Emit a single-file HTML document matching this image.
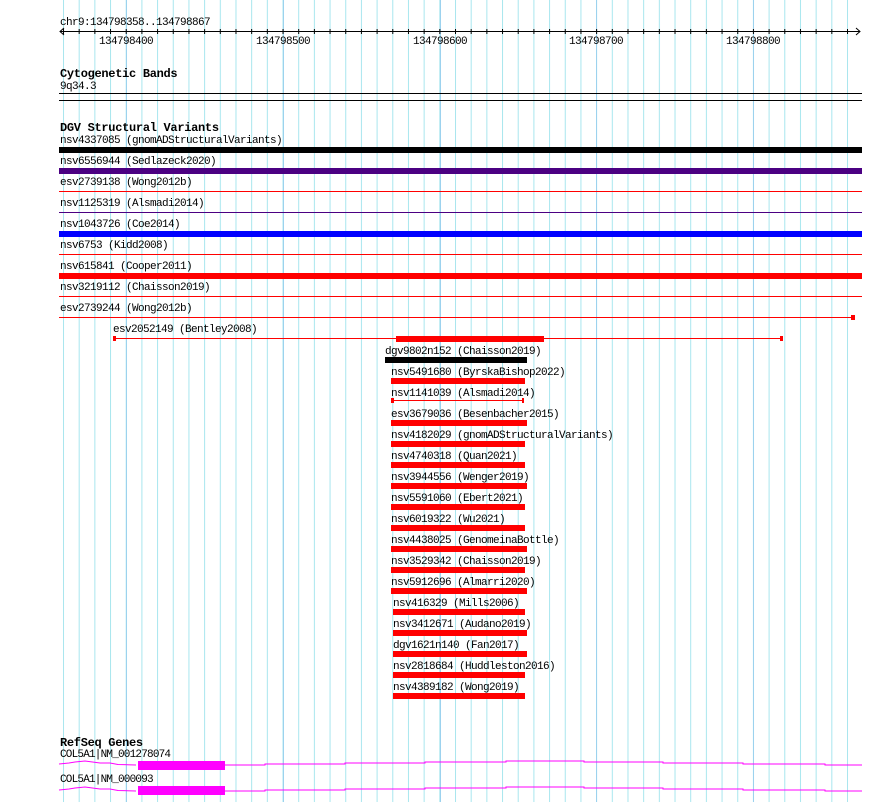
<!DOCTYPE html>
<html><head><meta charset="utf-8"><style>
html,body{margin:0;padding:0;background:#fff;}
svg{display:block;}
text{font-family:"Liberation Mono",monospace;font-size:11px;letter-spacing:-0.6px;fill:#000;}
.b{font-weight:bold;font-size:12px;letter-spacing:-0.3px;}
</style></head><body>
<svg width="890" height="802" xmlns="http://www.w3.org/2000/svg">
<defs>
<pattern id="g" x="63" y="0" width="15.68" height="802" patternUnits="userSpaceOnUse">
<rect x="0" y="0" width="1" height="802" fill="#a8e6ee"/>
</pattern>
<pattern id="t" x="63" y="0" width="15.68" height="40" patternUnits="userSpaceOnUse"><rect x="0" y="0" width="1" height="40" fill="#000"/></pattern>
</defs>
<rect x="63" y="0" width="790" height="802" fill="url(#g)"/>
<g fill="#9cd2ee">
<rect x="126" y="0" width="1" height="802"/><rect x="283" y="0" width="1" height="802"/>
<rect x="440" y="0" width="1" height="802"/><rect x="596" y="0" width="1" height="802"/>
<rect x="753" y="0" width="1" height="802"/>
</g>
<!-- ruler -->
<text x="60" y="25">chr9:134798358..134798867</text>
<line x1="60" y1="31.5" x2="860" y2="31.5" stroke="#000"/>
<path d="M64 28 L60 31.5 L64 35 M856 28 L860 31.5 L856 35" stroke="#000" fill="none"/>
<rect x="63" y="29" width="790" height="5" fill="url(#t)"/>
<g text-anchor="middle">
<text x="126" y="44">134798400</text><text x="283" y="44">134798500</text>
<text x="440" y="44">134798600</text><text x="596" y="44">134798700</text>
<text x="753" y="44">134798800</text>
</g>
<!-- cytobands -->
<text class="b" x="60" y="77">Cytogenetic Bands</text>
<text x="60" y="89">9q34.3</text>
<rect x="59" y="93" width="803" height="1" fill="#000"/>
<rect x="59" y="100" width="803" height="1" fill="#000"/>
<!-- DGV -->
<text class="b" x="60" y="131">DGV Structural Variants</text>
<text x="60" y="143">nsv4337085 (gnomADStructuralVariants)</text>
<rect x="59" y="147" width="803" height="6" fill="#000"/>
<text x="60" y="164">nsv6556944 (Sedlazeck2020)</text>
<rect x="59" y="168" width="803" height="6" fill="#4b0082"/>
<text x="60" y="185">esv2739138 (Wong2012b)</text>
<rect x="59" y="191" width="803" height="1" fill="#f00"/>
<text x="60" y="206">nsv1125319 (Alsmadi2014)</text>
<rect x="59" y="212" width="803" height="1" fill="#4b0082"/>
<text x="60" y="227">nsv1043726 (Coe2014)</text>
<rect x="59" y="231" width="803" height="6" fill="#00f"/>
<text x="60" y="248">nsv6753 (Kidd2008)</text>
<rect x="59" y="254" width="803" height="1" fill="#f00"/>
<text x="60" y="269">nsv615841 (Cooper2011)</text>
<rect x="59" y="273" width="803" height="6" fill="#f00"/>
<text x="60" y="290">nsv3219112 (Chaisson2019)</text>
<rect x="59" y="296" width="803" height="1" fill="#f00"/>
<text x="60" y="311">esv2739244 (Wong2012b)</text>
<rect x="59" y="317" width="796" height="1" fill="#f00"/>
<rect x="851" y="315" width="4" height="5" fill="#f00"/>
<text x="113" y="332">esv2052149 (Bentley2008)</text>
<rect x="113" y="338" width="670" height="1" fill="#f00"/>
<rect x="113" y="336" width="3" height="5" fill="#f00"/>
<rect x="780" y="336" width="3" height="5" fill="#f00"/>
<rect x="396" y="336" width="148" height="6" fill="#f00"/>
<text x="385" y="354">dgv9802n152 (Chaisson2019)</text>
<rect x="385" y="357" width="142" height="6" fill="#000"/>
<g fill="#f00">
<text x="391" y="375">nsv5491680 (ByrskaBishop2022)</text><rect x="391" y="378" width="134" height="6"/>
<text x="391" y="396">nsv1141039 (Alsmadi2014)</text><rect x="391" y="400" width="133" height="1"/><rect x="391" y="398" width="3" height="5"/><rect x="522" y="398" width="2" height="5"/>
<text x="391" y="417">esv3679036 (Besenbacher2015)</text><rect x="391" y="420" width="136" height="6"/>
<text x="391" y="438">nsv4182029 (gnomADStructuralVariants)</text><rect x="391" y="441" width="134" height="6"/>
<text x="391" y="459">nsv4740318 (Quan2021)</text><rect x="391" y="462" width="134" height="6"/>
<text x="391" y="480">nsv3944556 (Wenger2019)</text><rect x="391" y="483" width="136" height="6"/>
<text x="391" y="501">nsv5591060 (Ebert2021)</text><rect x="391" y="504" width="134" height="6"/>
<text x="391" y="522">nsv6019322 (Wu2021)</text><rect x="391" y="525" width="134" height="6"/>
<text x="391" y="543">nsv4438025 (GenomeinaBottle)</text><rect x="391" y="546" width="136" height="6"/>
<text x="391" y="564">nsv3529342 (Chaisson2019)</text><rect x="391" y="567" width="134" height="6"/>
<text x="391" y="585">nsv5912696 (Almarri2020)</text><rect x="391" y="588" width="136" height="6"/>
<text x="393" y="606">nsv416329 (Mills2006)</text><rect x="393" y="609" width="132" height="6"/>
<text x="393" y="627">nsv3412671 (Audano2019)</text><rect x="393" y="630" width="134" height="6"/>
<text x="393" y="648">dgv1621n140 (Fan2017)</text><rect x="393" y="651" width="134" height="6"/>
<text x="393" y="669">nsv2818684 (Huddleston2016)</text><rect x="393" y="672" width="132" height="6"/>
<text x="393" y="690">nsv4389182 (Wong2019)</text><rect x="393" y="693" width="132" height="6"/>
</g>
<!-- RefSeq -->
<text class="b" x="60" y="746">RefSeq Genes</text>
<text x="60" y="757" style="letter-spacing:-0.8px">COL5A1|NM_001278074</text>
<path d="M59 764 L69 763 L75 762 L85 761 L100 763 L110 763 L118 764.5 L136 765 M225 765 L265 765 L265 764 L345 764 L345 763 L425 763 L425 762 L506 762 L506 761 L584 761 L584 762 L663 762 L663 763 L743 763 L743 764 L825 764 L825 765 L862 765" stroke="#f0f" fill="none" stroke-width="1"/>
<rect x="138" y="761" width="87" height="9" fill="#f0f"/>
<text x="60" y="782" style="letter-spacing:-0.8px">COL5A1|NM_000093</text>
<path d="M59 790 L69 789 L75 788 L85 787 L100 789 L110 789 L118 790.5 L136 791 M225 791 L265 791 L265 790 L345 790 L345 789 L425 789 L425 788 L506 788 L506 787 L584 787 L584 788 L663 788 L663 789 L743 789 L743 790 L825 790 L825 791 L862 791" stroke="#f0f" fill="none" stroke-width="1"/>
<rect x="138" y="786" width="87" height="9" fill="#f0f"/>
</svg>
</body></html>
